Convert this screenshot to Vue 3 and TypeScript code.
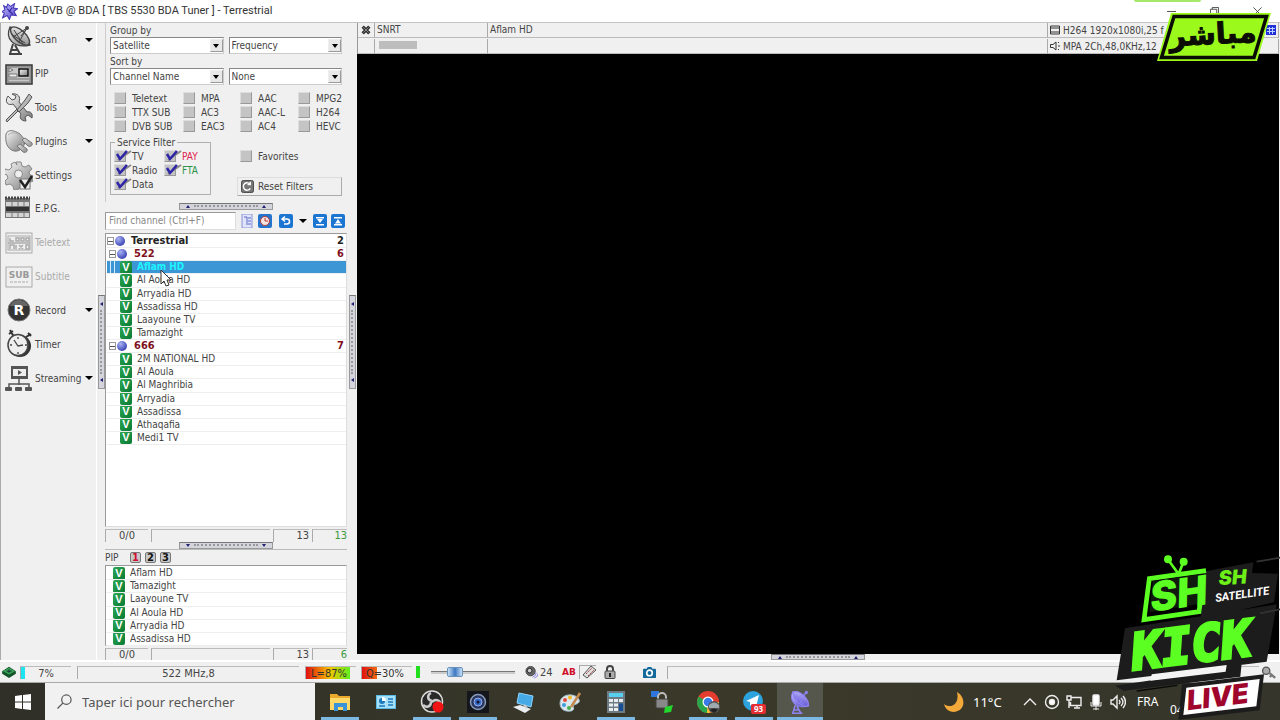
<script setup lang="ts">
import { ref } from 'vue'

interface Tool { name: string; icon: string; menu?: boolean; off?: boolean }
interface Row { name: string; level: number; count?: number }
interface Check { name: string; on?: boolean; tone?: string }
interface Task { name: string; icon: string; open?: boolean; active?: boolean }

const tools: Tool[] = [
  { name: 'Scan', icon: 'scan', menu: true },
  { name: 'PIP', icon: 'pip', menu: true },
  { name: 'Tools', icon: 'tools', menu: true },
  { name: 'Plugins', icon: 'plugins', menu: true },
  { name: 'Settings', icon: 'settings' },
  { name: 'E.P.G.', icon: 'epg' },
  { name: 'Teletext', icon: 'teletext', off: true },
  { name: 'Subtitle', icon: 'subtitle', off: true },
  { name: 'Record', icon: 'record', menu: true },
  { name: 'Timer', icon: 'timer' },
  { name: 'Streaming', icon: 'streaming', menu: true },
]

const codecs = ref<Check[]>(
  ['Teletext', 'MPA', 'AAC', 'MPG2', 'TTX SUB', 'AC3', 'AAC-L', 'H264', 'DVB SUB', 'EAC3', 'AC4', 'HEVC'].map(
    (name) => ({ name, on: false }),
  ),
)
const services = ref<Check[]>([
  { name: 'TV', on: true },
  { name: 'PAY', on: true, tone: 'pay' },
  { name: 'Radio', on: true },
  { name: 'FTA', on: true, tone: 'fta' },
  { name: 'Data', on: true },
])
const favorites = ref(false)

const rows: Row[] = [
  { name: 'Terrestrial', level: 0, count: 2 },
  { name: '522', level: 1, count: 6 },
  ...['Aflam HD', 'Al Aoula HD', 'Arryadia HD', 'Assadissa HD', 'Laayoune TV', 'Tamazight'].map((name) => ({ name, level: 2 })),
  { name: '666', level: 1, count: 7 },
  ...['2M NATIONAL HD', 'Al Aoula', 'Al Maghribia', 'Arryadia', 'Assadissa', 'Athaqafia', 'Medi1 TV'].map((name) => ({ name, level: 2 })),
]
const selected = ref(2)
const pipRows = ['Aflam HD', 'Tamazight', 'Laayoune TV', 'Al Aoula HD', 'Arryadia HD', 'Assadissa HD']

const volume = ref(24)
const tasks: Task[] = [
  { name: 'Explorer', icon: 'folder', open: true },
  { name: 'Control panel', icon: 'panel' },
  { name: 'OBS', icon: 'obs', open: true },
  { name: 'Camera', icon: 'lens', open: true },
  { name: 'Computer', icon: 'pc' },
  { name: 'Paint', icon: 'paint' },
  { name: 'Calculator', icon: 'calc', open: true },
  { name: 'Security', icon: 'sec' },
  { name: 'Chrome', icon: 'chrome', open: true },
  { name: 'Telegram', icon: 'telegram', open: true },
  { name: 'ALT-DVB', icon: 'dish', open: true, active: true },
]
</script>

<template>
  <div class="desktop">
    <svg width="0" height="0" class="defs" aria-hidden="true">
      <defs>
        <linearGradient id="steel" x1="0" y1="0" x2="1" y2="1"><stop offset="0" stop-color="#fafafa" /><stop offset="1" stop-color="#777" /></linearGradient>
        <linearGradient id="violet" x1="0" y1="0" x2="1" y2="1"><stop offset="0" stop-color="#c9c4ff" /><stop offset="1" stop-color="#4a3cc8" /></linearGradient>
        <symbol id="dishShape" viewBox="0 0 28 30">
          <path d="M8 19 5 29M10 20 15 29M6 25h7M4 29h13" fill="none" stroke="currentColor" stroke-width="2" />
          <path d="M5 2C0 13 8 24 25 20L23 15 9 3Z" stroke="currentColor" stroke-width="1.3" />
          <ellipse cx="15" cy="11" rx="12" ry="5.5" transform="rotate(43 15 11)" stroke="currentColor" stroke-width="1.4" />
          <path d="M8 12 22 3M14 17 22 3M16 11l6-8M9 5l9 14M6 9l14 9" fill="none" stroke="currentColor" stroke-width="1" />
          <circle cx="22" cy="3" r="2" fill="currentColor" />
        </symbol>
      </defs>
    </svg>

    <header class="titlebar">
      <svg class="app-icon" viewBox="0 0 28 30"><path d="M3 5l5 3 2-6 5 4 7-5-2 8 7 1-6 5 4 7-9-1-3 8-4-7-8 4 3-8-4-3 5-3z" fill="url(#violet)" stroke="#4a3cb8" stroke-width="2" /><path d="M9 10l10 10M18 8l-6 8" stroke="#3426a0" stroke-width="2" /></svg>
      <h1>ALT-DVB @ BDA [ TBS 5530 BDA Tuner ] - Terrestrial</h1>
      <div class="winbtns">
        <button aria-label="Minimize"><svg viewBox="0 0 10 10"><path d="M0 5h10" /></svg></button>
        <button aria-label="Restore"><svg viewBox="0 0 10 10"><path d="M.5 2.5h7v7h-7zM2.5 2.500V.5h7v7h-2" /></svg></button>
        <button aria-label="Close"><svg viewBox="0 0 10 10"><path d="M.5.5l9 9M9.500.5l-9 9" /></svg></button>
      </div>
    </header>

    <main class="workspace">
      <nav class="tools">
        <div class="tool-grid">
          <button v-for="t in tools" :key="t.name" class="tool" :disabled="t.off">
            <svg viewBox="0 0 28 30" class="tool-icon">
              <use v-if="t.icon === 'scan'" href="#dishShape" fill="url(#steel)" color="#444" />
              <g v-else-if="t.icon === 'pip'">
                <rect x="1" y="6" width="26" height="19" fill="#aaa" stroke="#333" stroke-width="1.5" />
                <rect x="3" y="8" width="22" height="15" fill="#c8c8c8" stroke="#777" />
                <path d="M4 9l4 2-4 2zM4 15h8v3H4zM4 20h20" fill="#eee" stroke="#777" />
                <rect x="14" y="10" width="9" height="7" fill="url(#steel)" stroke="#111" stroke-width="1.500" />
              </g>
              <g v-else-if="t.icon === 'tools'" stroke="#555" stroke-width="1">
                <path d="M3 3l4 4 3-1 1-3-4-2c6-1 9 3 7 8l8 10c4-1 6 2 5 6l-4-3-3 2 1 4c-5 0-7-3-5-7L8 11C3 13-1 9 3 3Z" fill="url(#steel)" />
                <path d="M24 1l3 3-4 6-9 9-2-2 8-10ZM13 18l-7 7-4 4-1-2 4-4 7-7Z" fill="url(#steel)" />
              </g>
              <g v-else-if="t.icon === 'plugins'" stroke="#777">
                <path d="M1 8C3 3 9 4 15 8l5 6c0 7-5 12-11 11C2 23 0 16 1 8Z" fill="url(#steel)" />
                <path d="M3 9c7-6 14 1 15 11" fill="none" stroke="#aaa" />
                <path d="M17 14l3-2 7 5c1 3-2 4-4 3ZM12 20l3-2 7 5c1 3-2 4-4 3Z" fill="url(#steel)" />
              </g>
              <g v-else-if="t.icon === 'settings'">
                <path d="M11 2h5l1 4 3 1 4-2 3 4-3 3 1 3 4 1v5l-4 1-1 3 1 2-4 2-4-2-3 1-1 2H9l-1-4-3-2-4 1-1-4 3-3-1-3-3-1 1-5 4 1 3-3-1-3 4-2 2 3Z" fill="url(#steel)" stroke="#888" />
                <circle cx="13.500" cy="14" r="4" fill="#eee" stroke="#888" />
                <rect x="15" y="19" width="10" height="10" fill="#eee" stroke="#777" /><path d="M15 20l5 7 7-11" fill="none" stroke="#222" stroke-width="2.500" />
              </g>
              <g v-else-if="t.icon === 'epg'">
                <rect y="4" width="25" height="20" fill="#777" /><path d="M0 4h25" stroke="#444" stroke-width="3" stroke-dasharray="2 1" />
                <path d="M1 8h23v4H1zM1 19h23v4H1z" fill="#d4d4d4" /><path d="M7 7v17M13 7v17M19 7v17" stroke="#777" /><path d="M1 13h23v4H1z" fill="#333" />
              </g>
              <g v-else-if="t.icon === 'teletext'" fill="none" stroke="#aaa">
                <rect x="1" y="5" width="26" height="20" /><rect x="3" y="8" width="22" height="14" /><path d="M5 10v3h4M11 10h3v3h-3zM16 10h3v3h-3zM21 10h3v3h-3zM5 21v-4h4v4M11 17v4M14 17l4 4M18 17l-4 4M21 17h3v4h-3zM3 15h22" stroke-width="1.500" />
              </g>
              <g v-else-if="t.icon === 'subtitle'">
                <rect x="1" y="5" width="26" height="20" fill="none" stroke="#aaa" /><text x="14" y="16" class="sub">SUB</text><path d="M5 20h18" stroke="#aaa" stroke-dasharray="3 1" />
              </g>
              <g v-else-if="t.icon === 'record'">
                <circle cx="14" cy="15" r="11" fill="#333" stroke="#777" stroke-width="1" /><path d="M5 11c3-8 15-8 18 0" fill="#666" /><text x="14" y="20" class="rec">R</text>
              </g>
              <g v-else-if="t.icon === 'timer'">
                <path d="M4 5l4-3M5 1l4 7M21 8l5-3M23 4l3 3" stroke="#333" stroke-width="2" /><ellipse cx="15" cy="17" rx="11" ry="11" fill="#333" /><ellipse cx="13" cy="16" rx="10" ry="10.500" fill="#eee" stroke="#444" stroke-width="1.500" /><path d="M9 11l4 6 5-1M13 8v2M5 16h2M13 23v2M20 16h2" fill="none" stroke="#444" stroke-width="1.300" />
              </g>
              <g v-else fill="#555">
                <path d="M6 3h17v13H6z" /><path d="M8 6h13v7H8z" fill="#eee" /><path d="M13 7l4 2.500-4 2.500z" /><path d="M14 16v6M4 25v-4h20v4" fill="none" stroke="#555" stroke-width="1.500" /><rect x="0" y="24" width="7" height="4" rx="1" /><rect x="10" y="24" width="7" height="4" rx="1" /><rect x="20" y="24" width="7" height="4" rx="1" />
              </g>
            </svg>
            <span>{{ t.name }}</span>
            <i v-if="t.menu" class="caret"></i>
          </button>
        </div>
      </nav>

      <div class="vsplit"><span class="grip upright"><i></i><b></b><i></i></span></div>

      <section class="panel">
        <div class="filters">
          <label for="group1">Group by</label>
          <div class="pair">
            <span class="combo"><select id="group1"><option>Satellite</option></select><i class="caret"></i></span>
            <span class="combo"><select aria-label="Then group by"><option>Frequency</option></select><i class="caret"></i></span>
          </div>
          <label for="sort1">Sort by</label>
          <div class="pair">
            <span class="combo"><select id="sort1"><option>Channel Name</option></select><i class="caret"></i></span>
            <span class="combo"><select aria-label="Then sort by"><option>None</option></select><i class="caret"></i></span>
          </div>
          <div class="codecs">
            <label v-for="c in codecs" :key="c.name" class="check"><input v-model="c.on" type="checkbox" />{{ c.name }}</label>
          </div>
          <div class="service-row">
            <fieldset>
              <legend>Service Filter</legend>
              <label v-for="s in services" :key="s.name" class="check" :class="s.tone">
                <input v-model="s.on" type="checkbox" />
                <svg v-if="s.on" class="tick" viewBox="0 0 18 13"><path d="M4 11L17 2" stroke="#888" stroke-width="2" /><path d="M3 5l3 5 7-8" fill="none" stroke="#2d24a8" stroke-width="2.500" /></svg>{{ s.name }}
              </label>
            </fieldset>
            <div class="side">
              <label class="check"><input v-model="favorites" type="checkbox" />Favorites</label>
              <button class="reset">
                <svg viewBox="0 0 14 14"><rect x=".5" y=".5" width="13" height="13" rx="2" fill="#777" stroke="#444" /><path d="M10 5a4 4 0 1 0 0 4M10 2v3H7" fill="none" stroke="#fff" stroke-width="1.500" /></svg>
                Reset Filters
              </button>
            </div>
          </div>
        </div>

        <div class="hsplit"><span class="grip up"><i></i><b></b><i></i></span></div>

        <div class="find">
          <input type="text" placeholder="Find channel (Ctrl+F)" aria-label="Find channel" />
          <button class="ib list" aria-label="List"><svg viewBox="0 0 14 14"><rect x="2" width="10" height="14" fill="#dfe3fb" stroke="#8a93d8" /><path d="M4 3h3v8M8 4h3M8 7h3M8 10h3" fill="none" stroke="#5f6bc4" /></svg></button>
          <button class="ib" aria-label="Recent"><svg viewBox="0 0 14 14"><rect width="14" height="14" rx="2" fill="#2573cc" /><circle cx="7" cy="7" r="4.500" fill="#f4e4e4" stroke="#b63b3b" /><path d="M7 4v3h3" fill="none" stroke="#b33" /></svg></button>
          <button class="ib undo" aria-label="Back"><svg viewBox="0 0 14 14"><rect width="14" height="14" rx="2" fill="#1d75d2" /><path d="M4 5h4a2 2 0 0 1 0 5H5M6 2.500L3 5l3 2.500" fill="none" stroke="#fff" stroke-width="1.500" /></svg></button>
          <i class="caret"></i>
          <button class="ib" aria-label="Expand all"><svg viewBox="0 0 14 14"><rect width="14" height="14" rx="2" fill="#1d75d2" /><path d="M3 3h8v1.500H3zM3 10h8v1.500H3zM4 5h6L7 9z" fill="#fff" /></svg></button>
          <button class="ib" aria-label="Collapse all"><svg viewBox="0 0 14 14"><rect width="14" height="14" rx="2" fill="#1d75d2" /><path d="M3 3h8v1.500H3zM3 10h8v1.500H3zM4 9.500h6L7 5z" fill="#fff" /></svg></button>
        </div>

        <div class="tree">
          <div class="rows main-rows">
            <button v-for="(r, i) in rows" :key="i" class="row" :class="['l' + r.level, { sel: i === selected }]" @click="selected = i">
              <template v-if="r.level < 2"><i class="expander"></i><i class="sphere"></i></template>
              <i v-else class="badge">V</i>
              <span>{{ r.name }}</span><em v-if="r.count">{{ r.count }}</em>
            </button>
          </div>
          <svg class="cursor" viewBox="0 0 12 18"><path d="M1 1v14l3-3 2 5 3-1-2-5h4z" fill="#fff" stroke="#333" /></svg>
        </div>
        <div class="counts"><span>0/0</span><span></span><span>13</span><span>13</span></div>

        <div class="hsplit"><span class="grip down"><i></i><b></b><i></i></span></div>

        <div class="pipbar"><span>PIP</span><button class="hot">1</button><button>2</button><button>3</button></div>
        <div class="piplist">
          <div class="rows pip-rows">
            <button v-for="p in pipRows" :key="p" class="row pip"><i class="badge">V</i><span>{{ p }}</span></button>
          </div>
        </div>
        <div class="counts"><span>0/0</span><span></span><span>13</span><span>6</span></div>
      </section>

      <div class="vsplit wide"><span class="grip upright"><i></i><b></b><i></i></span></div>

      <section class="player">
        <div class="info">
          <span class="mid"><svg viewBox="0 0 12 12" width="10" height="10"><path d="M2 2l8 8M10 2l-8 8" stroke="#333" stroke-width="4" /><path d="M3 3l6 6M9 3L3 9" stroke="#999" /></svg></span>
          <span>SNRT</span><span>Aflam HD</span>
          <span class="codec"><svg viewBox="0 0 10 10"><path d="M.5 1h9v8h-9zM.5 3h9M.5 7h9" fill="none" stroke="#333" /></svg>H264 1920x1080i,25 f</span>
          <span></span><span><i class="meter"></i></span><span></span>
          <span class="codec"><svg viewBox="0 0 10 10"><path d="M.5 3.500H3L6 1v8L3 6.500H.5zM8 2l1-1M8 5h2M8 8l1 1" fill="none" stroke="#333" /></svg>MPA 2Ch,48,0KHz,12</span>
          <svg class="grid-icon" viewBox="0 0 10 10"><rect width="10" height="10" fill="#2130d8" /><path d="M1 3.500h8M1 6.500h8M3.500 2v7M6.500 2v7" stroke="#bcd0ff" /></svg>
        </div>
        <div class="video"></div>
        <div class="hsplit"><span class="grip up"><i></i><b></b><i></i></span></div>
      </section>
    </main>

    <footer class="status">
      <svg class="chip" viewBox="0 0 16 14"><path d="M0 6l8-5 8 5v3l-8 5-8-5z" fill="#14522a" /><path d="M1 6l7-4 7 4-7 4z" fill="#36a456" /><path d="M5 6h6M8 4v4" stroke="#123" /></svg>
      <span class="cell cpu">7%</span>
      <span class="cell freq">522 MHz,8</span>
      <span class="cell level">L=87%</span>
      <span class="cell quality">Q=30%</span>
      <i class="green"></i>
      <input v-model="volume" class="vol" type="range" min="0" max="100" aria-label="Volume" />
      <svg class="spk" viewBox="0 0 14 14"><circle cx="6" cy="5.500" r="5" fill="#666" stroke="#444" /><circle cx="5" cy="5" r="2.500" fill="#ccc" stroke="#222" /><path d="M8 12q4-1 4-5M10 13q4-1 4-5" fill="none" stroke="#8884dd" /></svg>
      <span class="volnum">{{ volume }}</span>
      <b class="ab">AB</b>
      <svg class="ticket" viewBox="0 0 18 14"><path d="M.5 0v14M1 .5h16" stroke="#aaa" /><path d="M4 10L12 1l5 4-9 8z" fill="#ddd" stroke="#555" /><path d="M7 9l6-6M9 11l6-6" stroke="#a44" stroke-dasharray="2 1" /></svg>
      <svg class="lock" viewBox="0 0 14 14"><path d="M4 7V4a3 3 0 0 1 6 0v3" fill="none" stroke="#444" stroke-width="2" /><rect x="2" y="6" width="10" height="7.500" rx="1" fill="#aaa" stroke="#444" /><path d="M7 8v4" stroke="#222" stroke-width="2" /></svg>
      <svg class="cam" viewBox="0 0 14 14"><path d="M0 4q0-1 1-1h3l1-2h4l1 2h3q1 0 1 1v8q0 1-1 1H1q-1 0-1-1z" fill="#136a9a" /><circle cx="7" cy="7.500" r="3" fill="none" stroke="#fff" stroke-width="1.800" /></svg>
      <span class="cell rest"></span>
      <svg class="key" viewBox="0 0 20 16"><circle cx="8" cy="6" r="4" fill="#aaa" stroke="#555" stroke-width="1.500" /><path d="M11 8l7 6M14 11l-2 2" stroke="#777" stroke-width="2.500" /></svg>
    </footer>

    <footer class="taskbar">
      <button class="start" aria-label="Start"><svg viewBox="0 0 16 16" fill="#fff"><path d="M0 2l7-1v6.500H0zM8 1l8-1v7.500H8zM0 8.500h7V15l-7-1zM8 8.500h8V16l-8-1z" /></svg></button>
      <label class="search"><svg viewBox="0 0 16 16"><circle cx="10" cy="6" r="5" /><path d="M6.500 9.500L.5 15.500" /></svg><input type="text" placeholder="Taper ici pour rechercher" aria-label="Taper ici pour rechercher" /></label>
      <div class="tasks">
        <button v-for="t in tasks" :key="t.name" :aria-label="t.name" :class="{ open: t.open, active: t.active }">
          <svg viewBox="0 0 24 24">
            <g v-if="t.icon === 'folder'"><path d="M2 4h7l2 2h11v14H2z" fill="#e9a92c" /><path d="M2 8h20v12H2z" fill="#ffd968" /><path d="M6 21v-8h13v8h-4v-4h-5v4z" fill="#3a93d8" /></g>
            <g v-else-if="t.icon === 'panel'"><rect x="2" y="5" width="20" height="14" fill="#5bbbe8" /><rect x="3" y="6" width="18" height="12" fill="#a6e0f8" /><circle cx="8" cy="11" r="3" fill="#1c79bd" /><path d="M8 11V7a4 4 0 0 1 4 4z" fill="#fff" /><path d="M14 9h5M14 12h5M14 15h5M5 16h6" stroke="#1c79bd" stroke-width="1.500" /></g>
            <g v-else-if="t.icon === 'obs'"><circle cx="12" cy="11.500" r="10.500" fill="#292929" stroke="#ddd" stroke-width="1.500" /><path d="M12 11c-5-1-5-6-1-8M12 12c4-4 9-1 8 3M11 12c0 5-5 6-8 3" fill="none" stroke="#ccc" stroke-width="2.500" /><circle cx="18" cy="17" r="5.500" fill="#f01414" /></g>
            <g v-else-if="t.icon === 'lens'"><rect x="1" y="1" width="22" height="22" fill="#15161c" /><circle cx="12" cy="12" r="7.500" fill="#26365c" stroke="#8a9ab8" stroke-width="1.500" /><circle cx="12" cy="12" r="4" fill="#3a6cc0" stroke="#99a9f0" /><circle cx="12" cy="12" r="1.500" fill="#0b1230" /></g>
            <g v-else-if="t.icon === 'pc'"><path d="M7 3l14 3-2 11-14-4z" fill="#46aae6" stroke="#8fd4fa" /><path d="M1 17l7-2 11 4-6 4z" fill="#e8eef2" /><path d="M12 15l3 3" stroke="#ccc" stroke-width="2" /></g>
            <g v-else-if="t.icon === 'paint'"><path d="M2 13C2 5 14 2 20 8c4 5-2 6-4 7s2 5-3 6C6 22 2 19 2 13Z" fill="#dce8ee" stroke="#9fb8c4" /><circle cx="7" cy="10" r="2" fill="#e24b3b" /><circle cx="12" cy="7.500" r="2" fill="#f1bb28" /><circle cx="6" cy="15" r="2" fill="#3e9edb" /><circle cx="11" cy="18" r="2" fill="#49ab4a" /><path d="M13 17L22 3" stroke="#c48a4b" stroke-width="2.500" /></g>
            <g v-else-if="t.icon === 'calc'"><rect x="3" y="1" width="18" height="22" fill="#6e7a84" /><rect x="5" y="3" width="14" height="4" fill="#57d0ee" /><path d="M5 9h4v3H5zM10 9h4v3h-4zM15 9h4v3h-4zM5 13.500h4v3H5zM10 13.500h4v3h-4zM5 18h4v3H5zM10 18h4v3h-4z" fill="#e8edf0" /><path d="M15 13.500h4V21h-4z" fill="#174e96" /></g>
            <g v-else-if="t.icon === 'sec'"><path d="M1 1h8v6H1z" fill="#2c76de" /><path d="M8 10V7a4 4 0 0 1 8 0v3" fill="none" stroke="#bbb" stroke-width="2" /><rect x="6" y="9" width="12" height="9" rx="1" fill="#888" stroke="#444" /><path d="M15 17l8-2-2 7-7 1z" fill="#23d52c" /></g>
            <g v-else-if="t.icon === 'chrome'"><circle cx="12" cy="12" r="11" fill="#e43d30" /><path d="M12 12L2.500 6.500A11 11 0 0 0 11 23z" fill="#29a64b" /><path d="M12 12h11a11 11 0 0 1-12 11z" fill="#fcc934" /><circle cx="12" cy="12" r="5.500" fill="#fff" /><circle cx="12" cy="12" r="4.300" fill="#3a7bea" /><circle cx="18" cy="17" r="6" fill="#555" /><path d="M13 15q5-5 10 0v3H13z" fill="#9ea9b0" /><path d="M14 20q4-3 8 0l-4 3z" fill="#222" /></g>
            <g v-else-if="t.icon === 'telegram'"><circle cx="11" cy="11" r="10" fill="#2ca3dc" /><path d="M4 11l13-6-3 12-4-3-2 2v-4z" fill="#fff" /><rect x="9" y="14" width="15" height="10" rx="2" fill="#e32d33" /><text x="16.500" y="22" class="num">93</text></g>
            <use v-else href="#dishShape" fill="url(#violet)" color="#8d83f0" />
          </svg>
        </button>
      </div>
      <div class="tray">
        <svg class="moon" viewBox="0 0 22 22"><path d="M14 1c9 5 9 19-3 20-6 0-9-4-10-8 6 5 16 1 13-12Z" fill="#f3a83a" /></svg>
        <span class="temp">11°C</span>
        <svg viewBox="0 0 16 16"><path d="M2 11l6-6 6 6" /></svg>
        <svg viewBox="0 0 16 16"><circle cx="8" cy="8" r="6.500" /><circle cx="8" cy="8" r="2.500" fill="#fff" /></svg>
        <svg viewBox="0 0 16 16"><path d="M5 3.500h10v8H4.500V8M8 14h6M11 11v3M1 2h4v4H1zM3 6v8" /></svg>
        <svg viewBox="0 0 16 16"><rect x="5" y="1" width="6" height="10" rx="1" fill="#fff" /><path d="M3 8v4h10V8M8 12v4M5 15h6" stroke-width="1" /></svg>
        <svg viewBox="0 0 16 16"><path d="M1 6h2l4-4v12l-4-4H1zM9 6q2 2 0 4M11 4q4 4 0 8M13 2q5 6 0 12" /></svg>
        <span class="lang">FRA</span>
        <span class="clock">04</span>
      </div>
    </footer>

    <svg class="live-tag" viewBox="0 0 116 50">
      <path d="M15 1h100l-14 48H1z" fill="#9bfa1c" /><path d="M18 4.500h92.500L98 45.500H5.500z" fill="#9bfa1c" stroke="#0b0d05" stroke-width="3.500" />
      <text x="57" y="32" transform="rotate(-3 57 26)">مباشر</text>
    </svg>
    <i class="green-edge"></i>

    <svg class="logo" viewBox="0 0 540 525">
      <path d="M310 80l150-28-4 32 78 2-12 86-220 50zM75 250l455-72-30 172-450 56zM45 422l150-22 230-45-4 40-350 42z" fill="#1c1c1c" />
      <path d="M480 205l60-12M470 50l70-12" stroke="#333" stroke-width="5" />
      <g fill="none" stroke="#5cff22"><path d="M318 77L148 101 132 224l165-24 3-22" stroke-width="14" /><path d="M234 85L205 45M238 82l12-30" stroke-width="8" /></g>
      <circle cx="204" cy="43" r="12" fill="#5cff22" /><circle cx="251" cy="50" r="12" fill="#5cff22" />
      <path d="M158 108l150-21-9 89-150 26z" fill="#101a0e" />
      <text x="156" y="201" transform="rotate(-8 156 201)" class="emblem" font-size="122">SH</text>
      <text x="357" y="121" transform="rotate(-4 357 121)" class="neon" font-size="60">SH</text>
      <text x="347" y="171" transform="rotate(-8 347 171)" class="sat" font-size="34">SATELLITE</text>
      <text x="101" y="374" transform="rotate(-7 101 374)" class="kick" font-size="150">KICK</text>
      <path d="M155 388l225-28-3 20-225 27z" fill="#f4f4f4" /><path d="M110 438l122-17" stroke="#080808" stroke-width="4" />
      <path d="M246 418l246-30-13 108-244 28z" fill="#1c1c1c" /><path d="M259 428l220-26-10 82-219 26z" fill="#fff" />
      <text x="264" y="496" transform="rotate(-7 264 496)" class="live" font-size="82">LIVE</text>
    </svg>
  </div>
</template>

<style>
html, body { margin: 0; background: #f0f0f0; overflow: hidden; }
</style>

<style scoped>
.desktop { position: relative; height: 100vh; display: flex; flex-direction: column; background: #f0f0f0; color: #444; font: 10px/13px "DejaVu Sans Condensed", "Noto Sans", sans-serif; overflow: hidden; }
.desktop * { box-sizing: border-box; }
.defs { position: absolute; }
button, input, select { font: inherit; color: inherit; }
button { border: 0; padding: 0; background: none; }
svg { display: block; flex: none; }
i, em { font-style: normal; }
.caret { width: 0; border: 4px solid transparent; border-top: 4px solid #000; border-bottom: 0; flex: none; }

.titlebar { height: 22px; background: #fff; display: flex; align-items: center; padding-left: 2px; flex: none; }
.app-icon { width: 16px; height: 17px; margin-right: 4px; }
h1 { margin: 0; font: 11px/20px Roboto, sans-serif; color: #333; flex: 1; }
.winbtns { display: flex; padding-right: 1px; }
.winbtns button { width: 43px; height: 20px; display: grid; place-items: center; }
.winbtns svg { width: 9px; height: 9px; fill: none; stroke: #444; }

.workspace { flex: 1; min-height: 0; display: flex; border-top: 1px solid #c4c4c4; }
.tools { width: 97px; border-left: 1px solid #aaa; border-right: 1px solid #fff; flex: none; }
.tool-grid { display: grid; grid-auto-rows: 1fr; height: 372px; }
.tool { display: flex; align-items: center; gap: 2px; padding-left: 4px; padding-right: 3px; text-align: left; }
.tool .caret { margin-left: auto; }
.tool:disabled { color: #aaa; }
.tool-icon { width: 28px; height: 30px; }
.sub { font: bold 9px "DejaVu Sans", sans-serif; fill: #999; text-anchor: middle; }
.rec { font: bold 14px "DejaVu Sans", sans-serif; fill: #fff; text-anchor: middle; }

.vsplit { width: 8px; display: grid; place-items: center; flex: none; }
.vsplit.wide { width: 10px; }
.hsplit { height: 8px; display: grid; place-items: center; flex: none; }
.grip { display: flex; justify-content: space-between; align-items: center; width: 94px; height: 7px; padding: 0 6px; background: #d4d4dc; border: 1px solid #999; border-top-color: #777; }
.grip i { width: 0; border: 2px solid transparent; border-bottom: 3px solid #20206c; border-top: 0; }
.grip.down i { border-top: 3px solid #20206c; border-bottom: 0; }
.grip b { flex: 1; margin: 0 4px; border-top: 2px dotted #999; }
.grip.upright { flex-direction: column; width: 7px; height: 94px; padding: 6px 0; }
.grip.upright b { margin: 4px 0; border-top: 0; border-left: 2px dotted #999; }
.grip.upright i { border: 2px solid transparent; border-right: 3px solid #20206c; border-left: 0; }

.panel { width: 242px; flex: none; display: flex; flex-direction: column; }
.filters { height: 179px; flex: none; border-left: 1px solid #ccc; padding: 0 5px 0 4px; }
.filters > label { display: block; height: 14px; line-height: 15px; }
.pair { display: grid; grid-template-columns: 1fr 1fr; gap: 5px; height: 17px; }
.combo { display: flex; align-items: center; background: #fff; border: 1px solid #888; border-right-color: #ccc; border-bottom-color: #ccc; min-width: 0; }
.combo select { appearance: none; border: 0; background: none; padding: 0 2px; flex: 1; height: 15px; min-width: 0; line-height: 15px; }
.combo .caret { width: 13px; height: 13px; border: 1px solid #999; border-left-color: #eee; border-top-color: #eee; background: #e8e8e8; display: grid; place-items: center; }
.combo .caret::after { content: ""; border: 3px solid transparent; border-top: 4px solid #000; border-bottom: 0; }
.codecs { display: grid; grid-template-columns: 69px 57px 58px 1fr; grid-auto-rows: 14px; padding-left: 4px; margin-top: 6px; }
.check { display: flex; align-items: center; gap: 6px; white-space: nowrap; position: relative; }
.check input { appearance: none; margin: 0; width: 12px; height: 12px; background: #c4c4c4; border: 1px solid #999; border-top-color: #ddd; border-left-color: #ddd; flex: none; }
.tick { position: absolute; left: 0; top: 0; width: 18px; height: 13px; }
.pay { color: #e0224c; }
.fta { color: #2a9244; }
.service-row { display: flex; align-items: flex-start; margin-top: 3px; }
fieldset { margin: 0; width: 101px; height: 59px; flex: none; border: 1px solid #b0b0b0; padding: 0 0 0 3px; display: grid; grid-template-columns: 50px 1fr; grid-auto-rows: 14px; min-width: 0; }
legend { padding: 0 2px; margin-left: 1px; line-height: 13px; }
.side { flex: 1; padding-top: 13px; margin-left: 26px; }
.side .check { height: 14px; margin-left: 3px; }
.reset { width: 100%; height: 19px; margin-top: 14px; display: flex; align-items: center; gap: 4px; padding-left: 3px; border: 1px solid #ddd; border-right-color: #aaa; border-bottom-color: #aaa; white-space: nowrap; }
.reset svg { width: 13px; height: 13px; }

.find { height: 23px; display: flex; align-items: center; gap: 4px; padding: 0 2px 2px 0; flex: none; }
.find input { width: 131px; height: 18px; border: 1px solid #999; border-right-color: #ddd; border-bottom-color: #ddd; background: #fff; padding: 0 3px; }
.find input::placeholder { color: #888; opacity: 1; }
.ib svg { width: 14px; height: 14px; }
.find .undo { margin-left: auto; }
.find .caret { margin: 0 2px; }

.tree { position: relative; flex: 1; min-height: 0; background: #fff; border: 1px solid #999; border-right-color: #ddd; border-bottom-color: #ddd; }
.rows { display: grid; grid-auto-rows: 1fr; }
.main-rows { height: 211px; padding-top: 1px; }
.pip-rows { height: 80px; padding-top: 1px; }
.row { display: flex; align-items: center; text-align: left; padding-right: 2px; border-bottom: 1px solid #eee; min-height: 0; white-space: nowrap; overflow: hidden; margin: 0 0 0 1px; line-height: 12px; }
.row em { margin-left: auto; }
.row.l0, .row.l1 { font-weight: bold; font-size: 11px; }
.row.l0 { color: #222; }
.row.l0 .sphere { margin-right: 6px; }
.row.l1 { color: #801020; padding-left: 2px; }
.row.l1 .sphere { margin-right: 7px; }
.row.l2 { padding-left: 13px; }
.row.pip { padding-left: 6px; }
.row.sel { background: linear-gradient(90deg, transparent 3px, #d8ecfa 3px 4px, transparent 4px 7px, #d8ecfa 7px 8px, transparent 8px), #3c95d5; color: #1cf4ff; font-weight: bold; }
.expander { width: 7px; height: 8px; border: 1px solid #999; background: linear-gradient(#555, #555) center / 5px 1px no-repeat; margin-right: 1px; }
.sphere { width: 10px; height: 10px; border-radius: 50%; background: radial-gradient(circle at 35% 30%, #aab4f4, #3a44b4 75%); }
.badge { width: 12px; height: 13px; margin-right: 5px; border-radius: 2px; background: linear-gradient(135deg, #30a855, #077a32); color: #fff; font: bold 11px/13px "Liberation Sans", sans-serif; text-align: center; flex: none; }
.cursor { position: absolute; left: 54px; top: 35px; width: 12px; height: 18px; }

.counts { display: grid; grid-template-columns: 43px 1fr 36px 35px; gap: 3px; height: 12px; margin-top: 2px; flex: none; line-height: 12px; font-size: 11px; }
.counts span { border-left: 1px solid #aaa; border-top: 1px solid #bbb; text-align: right; }
.counts span:first-child { text-align: center; }
.counts span:last-child { color: #3a9a3a; }
.pipbar { height: 16px; flex: none; display: flex; align-items: center; gap: 4px; border-top: 1px solid #bbb; }
.pipbar span { width: 21px; }
.pipbar button { width: 11px; height: 11px; border: 1px solid #777; border-radius: 2px; background: #c8c8c8; color: #111; font: bold 10px/9px "DejaVu Sans", sans-serif; }
.pipbar .hot { color: #d01030; }
.piplist { height: 81px; flex: none; background: #fff; border: 1px solid #999; border-right-color: #ddd; border-bottom-color: #ddd; }

.player { flex: 1; min-width: 0; display: flex; flex-direction: column; padding-right: 1px; }
.info { position: relative; display: grid; grid-template-columns: 17px 113px 1fr 231px; grid-auto-rows: 15px; height: 31px; row-gap: 1px; flex: none; border-left: 1px solid #999; border-bottom: 1px solid #999; }
.info > span { border-right: 1px solid #aaa; border-bottom: 1px solid #bbb; padding-left: 2px; line-height: 13px; white-space: nowrap; overflow: hidden; }
.info .mid { display: grid; place-items: center; padding: 0; }
.info .codec { display: flex; align-items: center; gap: 3px; }
.codec svg { width: 10px; height: 10px; }
.meter { display: block; width: 38px; height: 8px; background: #bdbdbd; margin: 2px; }
.grid-icon { position: absolute; right: 3px; top: 2px; width: 10px; height: 10px; }
.video { flex: 1; background: #000; }
.player .hsplit { height: 6px; }
.player .grip { height: 6px; }

.status { height: 23px; flex: none; display: flex; align-items: center; padding: 1px 3px 1px 1px; border-top: 2px solid #fff; border-bottom: 1px solid #aaa; }
.chip { width: 16px; height: 12px; margin-right: 3px; }
.cell { height: 13px; line-height: 13px; border-left: 1px solid #aaa; border-top: 1px solid #bbb; text-align: center; margin-right: 6px; flex: none; }
.cpu { width: 51px; background: linear-gradient(90deg, #1ce4f0 4px, transparent 4px); }
.freq { width: 222px; }
.level, .quality { width: 51px; padding-right: 4px; color: #333; }
.level { margin-right: 5px; background: linear-gradient(90deg, #e01010, #f4c400 24px, #60f020 44px, transparent 44px); }
.quality { margin-right: 4px; background: linear-gradient(90deg, #e01010, #f46c10 15px, transparent 15px); }
.green { width: 4px; height: 12px; background: #20e020; margin-right: 11px; }
.vol { appearance: none; background: none; width: 84px; height: 14px; margin: 0 10px 0 0; flex: none; }
.vol::-webkit-slider-runnable-track { height: 3px; background: #ccc; border-top: 1px solid #777; }
.vol::-webkit-slider-thumb { appearance: none; width: 16px; height: 10px; margin-top: -5px; border: 1px solid #6a92b8; border-radius: 2px; background: linear-gradient(90deg, #c8e0f8, #3c78c0, #c8e0f8); }
.status .cell, .volnum { font-size: 11px; }
.spk { width: 13px; height: 13px; margin-right: 2px; }
.volnum { width: 22px; }
.ab { width: 17px; color: #d01028; font: bold 9px/13px "DejaVu Sans", sans-serif; }
.ticket { width: 18px; height: 14px; margin-right: 6px; }
.lock { width: 14px; height: 14px; margin-right: 26px; }
.cam { width: 13px; height: 13px; margin-right: 11px; }
.rest { flex: 1; margin-right: 0; }
.key { width: 18px; height: 15px; }

.taskbar { height: 37px; flex: none; display: flex; background: linear-gradient(90deg, #303029, #3a3929 60%, #35352b); color: #fff; font: 13px/18px "Noto Sans", sans-serif; }
.start { width: 45px; display: grid; place-items: center; flex: none; }
.start svg { width: 16px; height: 16px; }
.search { width: 270px; flex: none; background: #f1f1f1; display: flex; align-items: center; padding-left: 12px; gap: 10px; color: #555; }
.search svg { width: 15px; height: 15px; fill: none; stroke: #555; stroke-width: 1.3; }
.search input { flex: 1; min-width: 0; border: 0; background: none; padding: 0; font-size: 13px; }
.search input::placeholder { color: #555; opacity: 1; }
.tasks { display: flex; padding-left: 2px; }
.tasks button { width: 46px; display: grid; place-items: center; background: linear-gradient(#7bb8e4, #7bb8e4) center bottom / 0 3px no-repeat; }
.tasks .open { background-size: 38px 3px; }
.tasks .active { background-color: #56574c; background-size: 46px 3px; }
.tasks svg { width: 24px; height: 24px; }
.num { font: bold 8px "Noto Sans", sans-serif; fill: #fff; text-anchor: middle; }
.tray { margin-left: auto; width: 337px; display: flex; align-items: center; }
.tray svg { width: 16px; height: 16px; fill: none; stroke: #eee; stroke-width: 1.4; margin-right: 6px; }
.tray .moon { width: 22px; height: 22px; stroke: none; margin-right: 8px; }
.temp { width: 49px; }
.lang { width: 33px; margin-left: 5px; font-size: 12px; }
.clock { font-size: 12px; padding-top: 16px; }

.live-tag { position: absolute; right: 8px; top: 12px; width: 116px; height: 50px; }
.live-tag text { font: bold 29px "DejaVu Sans", sans-serif; text-anchor: middle; fill: #0b0d05; stroke: #0b0d05; stroke-width: 1; }
.green-edge { position: absolute; right: 79px; top: 0; width: 67px; height: 2px; background: #a4e86c; border-radius: 0 0 30px 30px; }
.logo { position: absolute; right: 0; bottom: 0; width: 180px; height: 175px; }
.logo text { font-family: Inter, "DejaVu Sans", sans-serif; font-weight: 900; font-style: italic; fill: #5cff22; }
.logo .kick { font-family: "DejaVu Sans Mono", monospace; font-weight: bold; stroke: #5cff22; stroke-width: 10; }
.logo .neon { fill: #6cf018; }
.logo .sat { fill: #fff; font-family: Roboto, sans-serif; font-weight: 700; }
.logo .live { fill: #a0052c; }
</style>
